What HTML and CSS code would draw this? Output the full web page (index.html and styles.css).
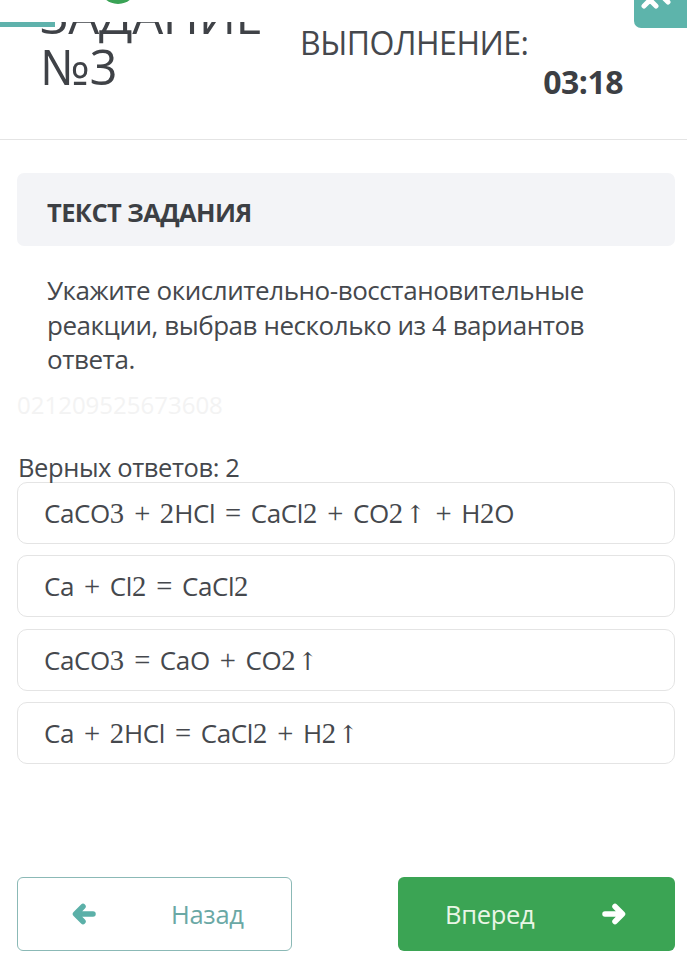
FILE: index.html
```html
<!DOCTYPE html>
<html lang="ru">
<head>
    <meta charset="UTF-8">
    <title>Задание №3</title>
    <link rel="stylesheet" href="styles.css">
</head>
<body>
<div class="page">
    <div class="header"><!--шапка с номером задания и таймером-->
        <div class="top-bar"><!--верхняя панель, прокрученная за край-->
            <span class="top-line"></span>
            <span class="top-dot"></span>
            <span class="top-close">
                <svg width="40" height="20" viewBox="0 0 40 20"><path d="M10 -6 L22 6 M22 -6 L10 6" stroke="#fff" stroke-width="5" stroke-linecap="round"/><path d="M26 -6 L34 2" stroke="#fff" stroke-width="5" stroke-linecap="round"/></svg>
            </span>
        </div>
        <div class="title">ЗАДАНИЕ<br>№3</div>
        <div class="status">
            <div class="status-label">ВЫПОЛНЕНИЕ:</div>
            <div class="status-time">03:18</div>
        </div>
    </div>

    <div class="task-head">ТЕКСТ ЗАДАНИЯ</div>
    <p class="task-text">Укажите окислительно-восстановительные реакции, выбрав несколько из <span class="d">4</span> вариантов ответа.</p>
    <div class="mark">021209525673608</div>

    <div class="count">Верных ответов: 2</div>
    <ul class="answers">
        <li>CaCO<span class="d">3</span><span class="op">+</span><span class="d">2</span>HCl<span class="op">=</span>CaCl<span class="d">2</span><span class="op">+</span>CO<span class="d">2</span><span class="ar">↑</span><span class="op">+</span>H<span class="d">2</span>O</li>
        <li>Ca<span class="op">+</span>Cl<span class="d">2</span><span class="op">=</span>CaCl<span class="d">2</span></li>
        <li>CaCO<span class="d">3</span><span class="op">=</span>CaO<span class="op">+</span>CO<span class="d">2</span><span class="ar">↑</span></li>
        <li>Ca<span class="op">+</span><span class="d">2</span>HCl<span class="op">=</span>CaCl<span class="d">2</span><span class="op">+</span>H<span class="d">2</span><span class="ar">↑</span></li>
    </ul>

    <div class="nav">
        <a href="#" class="btn btn-back">
            <svg width="26" height="22" viewBox="0 0 26 22"><path d="M22 11 H5 M12 3.5 L4.5 11 L12 18.5" fill="none" stroke="#5bb0a8" stroke-width="5.5" stroke-linecap="round" stroke-linejoin="round"/></svg>
            <span>Назад</span>
        </a>
        <a href="#" class="btn btn-next">
            <span>Вперед</span>
            <svg width="26" height="22" viewBox="0 0 26 22"><path d="M4 11 H21 M14 3.5 L21.5 11 L14 18.5" fill="none" stroke="#fff" stroke-width="5.5" stroke-linecap="round" stroke-linejoin="round"/></svg>
        </a>
    </div>
</div>
</body>
</html>
```

FILE: styles.css
```css
* {
    margin: 0;
    padding: 0
}

ul {
    list-style: none
}

body {
    background: #fff;
    font-family: "Open Sans", "Liberation Sans", sans-serif;
    color: #45484d;
    overflow: hidden;
}

.page {
    width: 687px;
}

/* шапка: страница прокручена, поэтому верх заголовка срезан */
.header {
    position: relative;
    display: flex;
    height: 140px;
    border-bottom: 1px solid #e4e4e4;
    box-sizing: border-box;
}

.top-bar { /*липкая панель сверху, закрывает заголовок*/
    position: absolute;
    left: 0;
    top: 0;
    width: 100%;
    height: 22px;
    background: #fff;
    z-index: 2;
}

.top-line { /*бирюзовая полоса*/
    position: absolute;
    left: 0;
    top: 22px;
    width: 55px;
    height: 5px;
    background: #5fb2ac;
}

.top-dot {
    position: absolute;
    left: 99px;
    top: -34px;
    width: 38px;
    height: 38px;
    border-radius: 50%;
    background: #3aa356;
}

.top-close {
    position: absolute;
    right: 0;
    top: 0;
    width: 53px;
    height: 28px;
    background: #5db4ab;
    border-bottom-left-radius: 7px;
    overflow: hidden;
}

.title {
    margin: -10px 0 0 40px;
    width: 260px;
    font-size: 49px;
    line-height: 51px;
    color: #3f4247;
    letter-spacing: -0.3px;
}

.status {
    width: 323px;
    padding-top: 25px;
}

.status-label {
    font-size: 32px;
    line-height: 36px;
    color: #45484d;
    letter-spacing: -0.5px;
}

.status-time {
    margin-top: 2px;
    text-align: right;
    font-size: 32px;
    line-height: 38px;
    font-weight: bold;
    color: #3c3f44;
    letter-spacing: -0.5px;
}

.task-head {
    margin: 33px 12px 0 17px;
    height: 73px;
    padding-left: 30px;
    border-radius: 7px;
    background: #f3f4f7;
    font-size: 25.5px;
    font-weight: bold;
    line-height: 78px;
    color: #3c3f44;
    letter-spacing: -0.6px;
}

.task-text {
    margin: 27px 30px 0 47px;
    font-size: 26px;
    line-height: 34.5px;
    color: #45484d;
    letter-spacing: -0.45px;
}

.d { /*цифры как в формулах*/
    font-family: "Liberation Serif", "DejaVu Serif", serif;
    font-size: 1.1em;
    line-height: 1;
    letter-spacing: 0;
}

.mark {
    margin: 13px 0 0 17px;
    font-size: 24px;
    line-height: 30px;
    color: #f3f3f3;
}

.count {
    margin: 32px 0 0 18px;
    font-size: 25.5px;
    line-height: 30px;
    color: #45484d;
    letter-spacing: -0.4px;
}

.answers {
    padding-bottom: 1px;
}

.answers li {
    margin: 0 12px 11.5px 17px;
    height: 62px;
    box-sizing: border-box;
    padding-left: 26px;
    border: 1px solid #e4e4e4;
    border-radius: 10px;
    font-size: 26px;
    line-height: 60px;
    color: #45484d;
    letter-spacing: -0.4px;
}

.op {
    font-family: "Liberation Serif", "DejaVu Serif", serif;
    font-size: 1.1em;
    margin: 0 10px;
}

.ar {
    font-family: "DejaVu Serif", serif;
    font-size: 0.95em;
    margin-left: 2px;
}

.nav {
    display: flex;
    justify-content: space-between;
    margin: 100px 12px 0 17px;
}

.btn {
    display: flex;
    align-items: center;
    height: 74px;
    box-sizing: border-box;
    border-radius: 6px;
    font-size: 25.5px;
    text-decoration: none;
    letter-spacing: -0.3px;
}

.btn-back {
    width: 275px;
    padding-left: 53px;
    gap: 74px;
    border: 1px solid #8bb9b6;
    color: #6aa8a5;
}

.btn-next {
    width: 277px;
    padding-left: 47px;
    gap: 67px;
    background: #3ba454;
    color: #e9f6e6;
}
```
